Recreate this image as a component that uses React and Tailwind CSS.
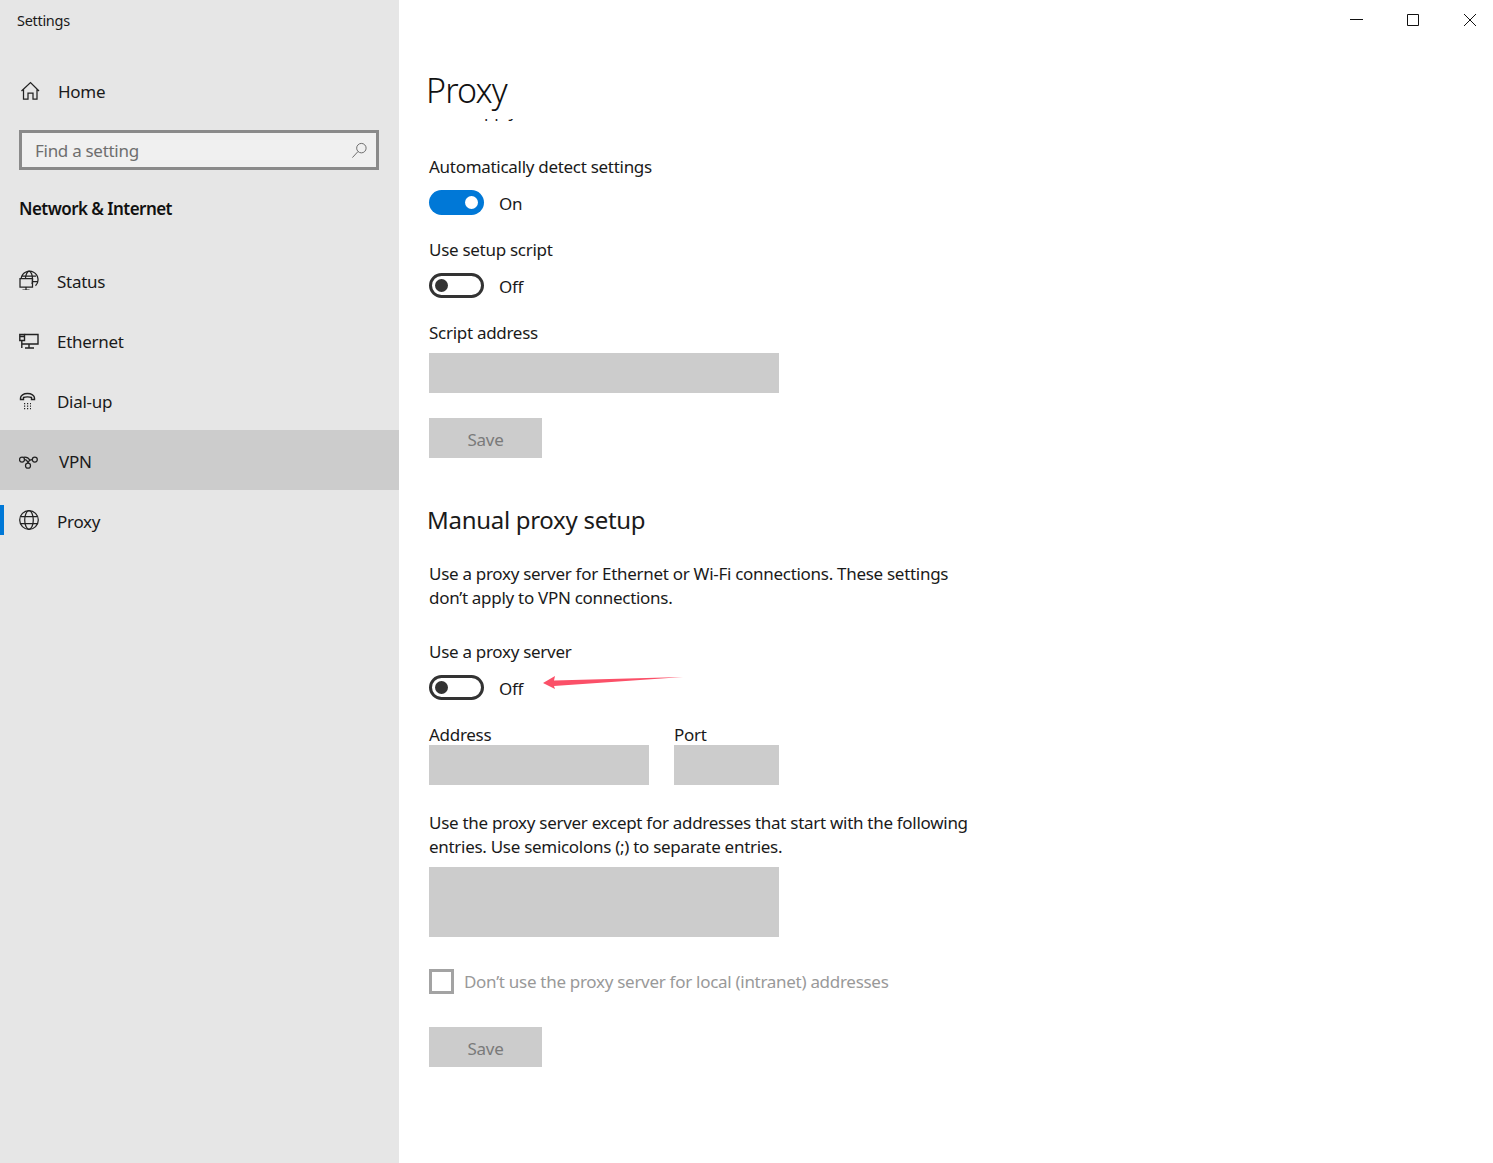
const font = { fontFamily: '"Noto Sans", sans-serif' };

function Icon({ children, className = "" }) {
  return (
    <svg viewBox="0 0 20 20" width="20" height="20" fill="none" stroke="#222" strokeWidth="1.25" className={`shrink-0 ${className}`}>
      {children}
    </svg>
  );
}

const HomeIcon = () => (
  <Icon>
    <path d="M1.500 10 10.500 1.500l8.500 8.500M3.500 8v10h4.500v-6h5v6h4V8" />
  </Icon>
);
const StatusIcon = () => (
  <Icon>
    <path d="M2.200 8A8.500 8.500 0 1 1 16.500 15.800M6.500 8c.3-3.500 1.700-6 3.500-7 2 1 3.500 3.800 3.500 8 0 2-.2 3.700-.5 5M3 6h14M13.500 11.500h5" />
    <path d="M1 8.500h12.500v8.500H1zM7 17v3M3.500 20h7" />
  </Icon>
);
const EthernetIcon = () => (
  <Icon>
    <path d="M5.500 4.500h13.500v9.500H3M10 14v4M6 18h9" strokeWidth="1.400" />
    <path d="M.8 4.500h4.700v6H.8zM.8 6.500h4.700M2.800 10.500v7.500" strokeWidth="1.400" />
  </Icon>
);
const DialIcon = () => (
  <Icon>
    <path d="M1.500 9.500V8c0-2.500 3-4.500 7-4.500s7 2 7 4.500v1.500h-3V7.500c-1.800-.8-6.200-.8-8 0v2z" strokeWidth="1.400" />
    <path strokeDasharray="1.200 1.800" d="M5 13.500h7M5 16h7M5 18.500h7" />
  </Icon>
);
const VpnIcon = () => (
  <Icon>
    <circle cx="3" cy="9.500" r="2.500" />
    <circle cx="15.800" cy="9.500" r="2.500" />
    <circle cx="9" cy="15.700" r="2.500" />
    <path d="M5.500 9.500c2 0 2.900 1 3.500 3.700.6-2.700 2-3.700 4.300-3.700M4.500 7.300c3-.5 5 .5 6.500 3" />
  </Icon>
);
const ProxyIcon = () => (
  <Icon>
    <circle cx="10" cy="10" r="9.300" />
    <ellipse cx="10" cy="10" rx="4.300" ry="9.300" />
    <path d="M1.800 6.500h16.400M1.800 13.500h16.400" />
  </Icon>
);

function NavRow({ icon, label, active, selected, textClass = "ml-[18px]" }) {
  return (
    <div className={`relative flex h-[60px] items-center pl-[19px] ${active ? "bg-[#cccccc]" : ""}`}>
      {selected && <span className="absolute left-0 top-[15px] h-[30px] w-[4px] bg-[#0078d7]" />}
      {icon}
      <span className={`${textClass} pt-[3px] text-[17px] tracking-[-0.29px] text-[#1a1a1a]`}>{label}</span>
    </div>
  );
}

function Toggle({ on }) {
  return (
    <div className="mt-[11px] flex h-[25px] items-center">
      {on ? (
        <span className="flex h-[25px] w-[55px] items-center justify-end rounded-full bg-[#0078d7] pr-[6px]">
          <span className="h-[13px] w-[13px] rounded-full bg-white" />
        </span>
      ) : (
        <span className="flex h-[25px] w-[55px] items-center rounded-full border-[3px] border-[#333333] pl-[3px]">
          <span className="h-[13px] w-[13px] rounded-full bg-[#333333]" />
        </span>
      )}
      <span className="ml-[15px] pt-[2px] text-[17px] tracking-[-0.29px] text-[#1a1a1a]">{on ? "On" : "Off"}</span>
    </div>
  );
}

function Label({ children, className = "" }) {
  return <div className={`h-[24px] text-[17px] leading-[24px] tracking-[-0.29px] text-[#1a1a1a] ${className}`}>{children}</div>;
}

function SaveButton({ className = "" }) {
  return (
    <div className={`flex h-[40px] w-[113px] items-center justify-center bg-[#cccccc] pt-[3px] text-[17px] tracking-[-0.29px] text-[#7a7a7a] ${className}`}>
      Save
    </div>
  );
}

export default function App() {
  return (
    <div style={font} className="flex h-[1163px] w-full overflow-hidden bg-white">
      <aside className="w-[399px] shrink-0 bg-[#e6e6e6]">
        <div className="h-[41px] pl-[17px] pt-[8px] text-[14.500px] leading-[24px] tracking-[-0.3px] text-[#1a1a1a]">Settings</div>
        <div className="mt-[20px] flex h-[60px] items-center pl-[20px]">
          <HomeIcon />
          <span className="ml-[18px] pt-[1px] text-[17px] tracking-[-0.29px] text-[#1a1a1a]">Home</span>
        </div>
        <div className="ml-[19px] mt-[9px] flex h-[40px] w-[360px] items-center justify-between border-[3px] border-[#8a8a8a] bg-[#f0f0f0] pl-[13px] pr-[8px]">
          <span className="pt-[1px] text-[17px] tracking-[-0.29px] text-[#6e6e6e]">Find a setting</span>
          <svg viewBox="0 0 18 18" width="17" height="17" fill="none" stroke="#666" strokeWidth="1">
            <circle cx="11" cy="6.500" r="5" />
            <path d="M7.500 10 1.500 16.500" />
          </svg>
        </div>
        <div className="ml-[19px] mt-[27px] h-[24px] text-[17px] font-semibold leading-[24px] tracking-[-0.55px] text-[#111111]">Network &amp; Internet</div>
        <div className="mt-[29px]">
          <NavRow icon={<StatusIcon />} label="Status" />
          <NavRow icon={<EthernetIcon />} label="Ethernet" />
          <NavRow icon={<DialIcon />} label="Dial-up" />
          <NavRow icon={<VpnIcon />} label="VPN" active textClass="ml-[20px]" />
          <NavRow icon={<ProxyIcon />} label="Proxy" selected />
        </div>
      </aside>

      <main className="relative min-w-0 flex-1 pl-[30px]">
        <div className="flex h-[40px] items-center justify-end pr-[16px]">
          <svg width="14" height="14" viewBox="0 0 14 14" stroke="#111" fill="none" className="mr-[42px]"><path d="M0 6.500h13" /></svg>
          <svg width="14" height="14" viewBox="0 0 14 14" stroke="#111" fill="none" className="mr-[43px]"><path d="M1.500 1.500h11v11h-11z" /></svg>
          <svg width="14" height="14" viewBox="0 0 14 14" stroke="#111" fill="none"><path d="M1 1l12 12M13 1 1 13" /></svg>
        </div>
        <h1 className="-ml-[3px] mt-[26px] h-[48px] text-[34px] font-light leading-[48px] tracking-[-0.9px] text-[#111111]">Proxy</h1>
        <div className="mt-[5px] h-[3px] overflow-hidden">
          <div className="-mt-[20px] pl-[5px] text-[17px] leading-[24px] tracking-[-0.29px] text-[#1a1a1a]">Auto apply</div>
        </div>
        <Label className="mt-[33px]">Automatically detect settings</Label>
        <Toggle on />
        <Label className="mt-[23px]">Use setup script</Label>
        <Toggle />
        <Label className="mt-[23px]">Script address</Label>
        <div className="mt-[8px] h-[40px] w-[350px] bg-[#cccccc]" />
        <SaveButton className="mt-[25px]" />
        <h2 className="-ml-[2px] mt-[44px] h-[36px] text-[24px] leading-[36px] tracking-[-0.29px] text-[#1a1a1a]">Manual proxy setup</h2>
        <p className="mt-[24px] w-[580px] text-[17px] leading-[24px] tracking-[-0.29px] text-[#1a1a1a]">
          Use a proxy server for Ethernet or Wi-Fi connections. These settings
          <br />
          don’t apply to VPN connections.
        </p>
        <Label className="mt-[30px]">Use a proxy server</Label>
        <Toggle />
        <div className="mt-[23px] flex gap-[25px]">
          <div className="w-[220px]">
            <div className="h-[22px] text-[17px] leading-[24px] tracking-[-0.29px] text-[#1a1a1a]">Address</div>
            <div className="h-[40px] bg-[#cccccc]" />
          </div>
          <div className="w-[105px]">
            <div className="h-[22px] text-[17px] leading-[24px] tracking-[-0.29px] text-[#1a1a1a]">Port</div>
            <div className="h-[40px] bg-[#cccccc]" />
          </div>
        </div>
        <p className="mt-[26px] w-[600px] text-[17px] leading-[24px] tracking-[-0.29px] text-[#1a1a1a]">
          Use the proxy server except for addresses that start with the following
          <br />
          entries. Use semicolons (;) to separate entries.
        </p>
        <div className="mt-[8px] h-[70px] w-[350px] bg-[#cccccc]" />
        <div className="mt-[32px] flex h-[25px] items-center">
          <span className="h-[25px] w-[25px] border-[3px] border-[#a3a3a3]" />
          <span className="ml-[10px] text-[17px] tracking-[-0.29px] text-[#999999]">Don’t use the proxy server for local (intranet) addresses</span>
        </div>
        <SaveButton className="mt-[33px]" />

        <svg width="142" height="16" viewBox="0 0 142 16" className="absolute left-[143px] top-[675px]">
          <path d="M1 8 13 1l-1 4.500L141 2 12 11l1 3z" fill="#fb5068" />
        </svg>
      </main>
    </div>
  );
}
